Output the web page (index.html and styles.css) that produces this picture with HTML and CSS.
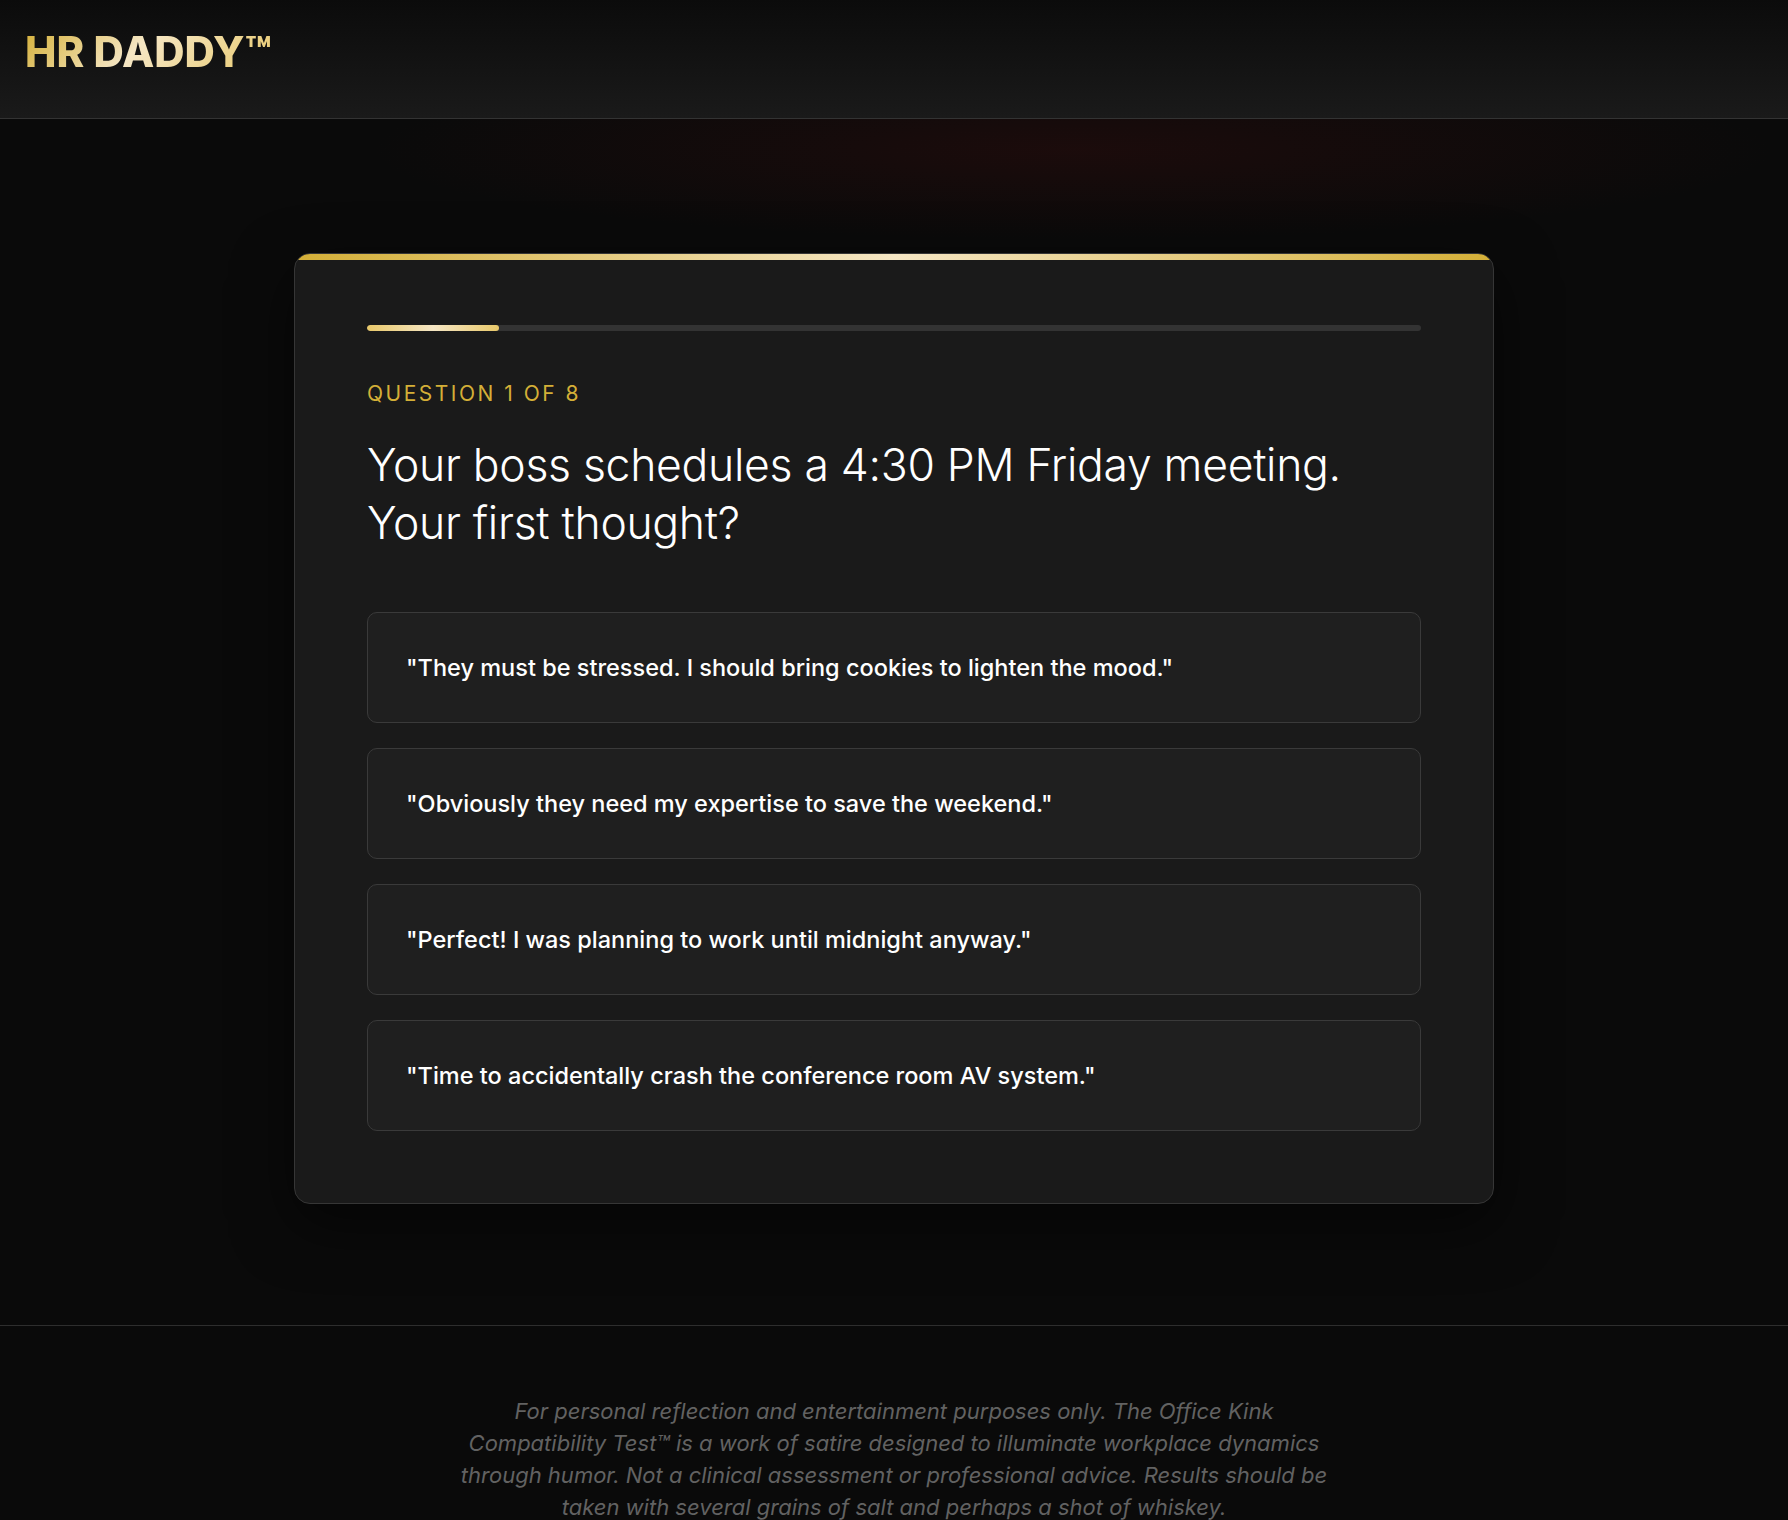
FILE: index.html
```html
<!DOCTYPE html>
<html lang="en">
<head>
<meta charset="utf-8">
<title>HR DADDY™ — Office Kink Compatibility Test</title>
<link rel="stylesheet" href="styles.css">
</head>
<body>
  <header class="site-header">
    <div class="logo">HR DADDY™</div>
  </header>

  <main class="main">
    <section class="quiz-card">
      <div class="card-accent"></div>
      <div class="progress">
        <div class="progress-fill" style="width: 12.5%"></div>
      </div>
      <div class="question-label">Question 1 of 8</div>
      <h1 class="question-text">Your boss schedules a 4:30 PM Friday meeting. Your first thought?</h1>
      <div class="options">
        <button class="option">"They must be stressed. I should bring cookies to lighten the mood."</button>
        <button class="option">"Obviously they need my expertise to save the weekend."</button>
        <button class="option">"Perfect! I was planning to work until midnight anyway."</button>
        <button class="option">"Time to accidentally crash the conference room AV system."</button>
      </div>
    </section>
  </main>

  <footer class="site-footer">
    <p class="disclaimer">For personal reflection and entertainment purposes only. The Office Kink<br>Compatibility Test™ is a work of satire designed to illuminate workplace dynamics<br>through humor. Not a clinical assessment or professional advice. Results should be<br>taken with several grains of salt and perhaps a shot of whiskey.</p>
  </footer>
</body>
</html>
```

FILE: styles.css
```css
* { box-sizing: border-box; }

html, body {
  margin: 0;
  padding: 0;
}

body {
  background-color: #0a0a0a;
  background-image: radial-gradient(ellipse 700px 90px at 60% 150px, rgba(60, 14, 14, 0.35), rgba(60, 14, 14, 0) 100%);
  background-repeat: no-repeat;
  color: #ffffff;
  font-family: "Inter", "Liberation Sans", sans-serif;
  min-height: 1520px;
}

.site-header {
  height: 119px;
  padding: 0 25px;
  display: flex;
  align-items: center;
  padding-bottom: 14px;
  background: linear-gradient(180deg, #0b0b0b 0%, #141414 60%, #1a1a1a 100%);
  border-bottom: 1px solid #333333;
}

.logo {
  font-family: "Inter", "Liberation Sans", sans-serif;
  font-weight: 800;
  font-size: 42px;
  letter-spacing: 0;
  line-height: 1.2;
  background: linear-gradient(135deg, #d4af37 0%, #f5e6c4 45%, #e8c86a 100%);
  -webkit-background-clip: text;
  background-clip: text;
  color: transparent;
}

.main {
  padding: 134px 24px 121px;
  display: flex;
  justify-content: center;
}

.quiz-card {
  position: relative;
  width: 1200px;
  background: #1a1a1a;
  border: 1px solid #363636;
  border-radius: 16px;
  padding: 71px 72px 72px;
  box-shadow: 0 20px 60px rgba(0, 0, 0, 0.55);
  overflow: hidden;
}

.card-accent {
  position: absolute;
  top: 0;
  left: 0;
  right: 0;
  height: 6px;
  background: linear-gradient(90deg, #d4af37 0%, #f5e6c4 50%, #d4af37 100%);
}

.progress {
  height: 6px;
  background: #333333;
  border-radius: 3px;
  overflow: hidden;
  margin-bottom: 51px;
}

.progress-fill {
  height: 100%;
  background: linear-gradient(90deg, #e8c86a 0%, #f5e6c4 50%, #e8c86a 100%);
  border-radius: 3px;
}

.question-label {
  color: #d4af37;
  font-size: 21px;
  font-weight: 400;
  letter-spacing: 2.5px;
  text-transform: uppercase;
  line-height: 24px;
  margin-bottom: 30px;
}

.question-text {
  margin: 0 0 60px;
  font-family: "Inter", "Liberation Sans", sans-serif;
  font-weight: 300;
  font-size: 44.5px;
  line-height: 58px;
  letter-spacing: -0.3px;
  color: #ffffff;
  max-width: 1054px;
}

.options {
  display: flex;
  flex-direction: column;
  gap: 25px;
}

.option {
  display: block;
  width: 100%;
  text-align: left;
  background: #1f1f1f;
  border: 1px solid #3a3a3a;
  border-radius: 10px;
  padding: 37px 38px 36px;
  color: #ffffff;
  font-family: "Inter", "Liberation Sans", sans-serif;
  font-size: 23.5px;
  font-weight: 500;
  line-height: 36px;
  cursor: pointer;
}

.site-footer {
  border-top: 1px solid #2e2e2e;
  padding: 69px 24px 40px;
}

.disclaimer {
  margin: 0 auto;
  text-align: center;
  font-style: italic;
  font-size: 22px;
  line-height: 32px;
  color: #626262;
  font-weight: 400;
}
```
